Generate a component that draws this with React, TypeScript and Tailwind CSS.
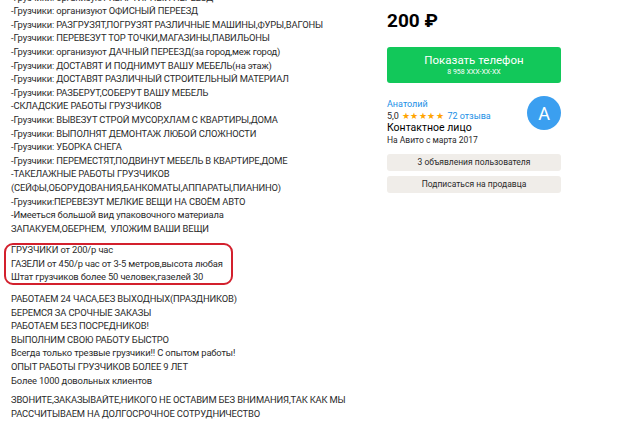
const font = { fontFamily: "Roboto, 'Noto Sans', sans-serif" };

const intro = [
  "-Грузчики: организуют КВАРТИРНЫЙ ПЕРЕЕЗД",
  "-Грузчики: организуют ОФИСНЫЙ ПЕРЕЕЗД",
  "-Грузчики: РАЗГРУЗЯТ,ПОГРУЗЯТ РАЗЛИЧНЫЕ МАШИНЫ,ФУРЫ,ВАГОНЫ",
  "-Грузчики: ПЕРЕВЕЗУТ ТОР ТОЧКИ,МАГАЗИНЫ,ПАВИЛЬОНЫ",
  "-Грузчики: организуют ДАЧНЫЙ ПЕРЕЕЗД(за город,меж город)",
  "-Грузчики: ДОСТАВЯТ И ПОДНИМУТ ВАШУ МЕБЕЛЬ(на этаж)",
  "-Грузчики: ДОСТАВЯТ РАЗЛИЧНЫЙ СТРОИТЕЛЬНЫЙ МАТЕРИАЛ",
  "-Грузчики: РАЗБЕРУТ,СОБЕРУТ ВАШУ МЕБЕЛЬ",
  "-СКЛАДСКИЕ РАБОТЫ ГРУЗЧИКОВ",
  "-Грузчики: ВЫВЕЗУТ СТРОЙ МУСОР,ХЛАМ С КВАРТИРЫ,ДОМА",
  "-Грузчики: ВЫПОЛНЯТ ДЕМОНТАЖ ЛЮБОЙ СЛОЖНОСТИ",
  "-Грузчики: УБОРКА СНЕГА",
  "-Грузчики: ПЕРЕМЕСТЯТ,ПОДВИНУТ МЕБЕЛЬ В КВАРТИРЕ,ДОМЕ",
  "-ТАКЕЛАЖНЫЕ РАБОТЫ ГРУЗЧИКОВ",
  "(СЕЙФЫ,ОБОРУДОВАНИЯ,БАНКОМАТЫ,АППАРАТЫ,ПИАНИНО)",
  "-Грузчики:ПЕРЕВЕЗУТ МЕЛКИЕ ВЕЩИ НА СВОЁМ АВТО",
  "-Имееться большой вид упаковочного материала",
  "ЗАПАКУЕМ,ОБЕРНЕМ,  УЛОЖИМ ВАШИ ВЕЩИ",
];

const prices = [
  "ГРУЗЧИКИ от 200/р час",
  "ГАЗЕЛИ от 450/р час от 3-5 метров,высота любая",
  "Штат грузчиков более 50 человек,газелей 30",
];

const extras = [
  "РАБОТАЕМ 24 ЧАСА,БЕЗ ВЫХОДНЫХ(ПРАЗДНИКОВ)",
  "БЕРЕМСЯ ЗА СРОЧНЫЕ ЗАКАЗЫ",
  "РАБОТАЕМ БЕЗ ПОСРЕДНИКОВ!",
  "ВЫПОЛНИМ СВОЮ РАБОТУ БЫСТРО",
  "Всегда только трезвые грузчики!! С опытом работы!",
  "ОПЫТ РАБОТЫ ГРУЗЧИКОВ БОЛЕЕ 9 ЛЕТ",
  "Более 1000 довольных клиентов",
];

const Lines = ({ items }: { items: string[] }) => (
  <>
    {items.map((t, i) => (
      <div key={i} className="whitespace-pre">
        {t}
      </div>
    ))}
  </>
);

export default function App() {
  return (
    <div
      className="flex w-[640px] h-[424px] overflow-hidden bg-white text-[#2a2a2a]"
      style={font}
    >
      <div className="w-[376px] shrink-0 pl-[11px] -mt-[9.4px] text-[9.4px] leading-[13.6px] tracking-[-0.15px]">
        <Lines items={intro} />

        <div className="relative mt-[8px]">
          <Lines items={prices} />
          <span className="absolute -left-[7px] top-0 w-[229px] -bottom-[1px] rounded-[9px] border-2 border-[#d3202d]" />
        </div>

        <div className="mt-[8px]">
          <Lines items={extras} />
        </div>

        <div className="mt-[6px] whitespace-nowrap">
          ЗВОНИТЕ,ЗАКАЗЫВАЙТЕ,НИКОГО НЕ ОСТАВИМ БЕЗ ВНИМАНИЯ,ТАК КАК МЫ
          <br />
          РАССЧИТЫВАЕМ НА ДОЛГОСРОЧНОЕ СОТРУДНИЧЕСТВО
        </div>
      </div>

      <div className="w-[174px] ml-[11px] shrink-0">
        <div className="pt-[9px] text-[19px] leading-[24px] font-bold text-black">
          200 ₽
        </div>

        <button className="mt-[14px] w-full h-[36px] rounded-[3px] bg-[#12c85a] text-white flex flex-col items-center justify-center">
          <span className="text-[11.5px] leading-[14px]">Показать телефон</span>
          <span className="text-[7px] leading-[9px] mt-[1px]">8 958 XXX-XX-XX</span>
        </button>

        <div className="mt-[15px] flex justify-between items-start">
          <div className="leading-[12px]">
            <div className="text-[9px] text-[#1a90e6]">Анатолий</div>
            <div className="text-[9px] flex items-center gap-[3px]">
              <span>5,0</span>
              <span className="text-[#ffa400] text-[8.5px] tracking-[0.5px]">★★★★★</span>
              <span className="text-[#1a90e6]">72 отзыва</span>
            </div>
            <div className="text-[10.5px] text-black">Контактное лицо</div>
            <div className="text-[8.5px]">На Авито с марта 2017</div>
          </div>
          <div className="-mt-[2px] w-[34px] h-[34px] rounded-full bg-[#3b9ff0] text-white text-[18px] flex items-center justify-center">
            A
          </div>
        </div>

        <div className="mt-[8px] flex flex-col gap-[5px] text-[8.5px]">
          <div className="h-[17px] rounded-[3px] bg-[#f0ede9] flex items-center justify-center">
            3 объявления пользователя
          </div>
          <div className="h-[17px] rounded-[3px] bg-[#f0ede9] flex items-center justify-center">
            Подписаться на продавца
          </div>
        </div>
      </div>
    </div>
  );
}
